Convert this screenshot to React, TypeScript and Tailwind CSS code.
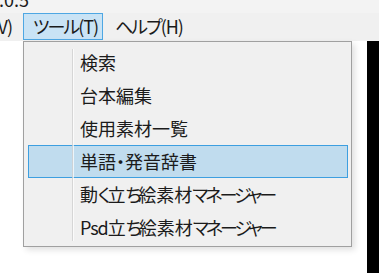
const items = [
  "検索",
  "台本編集",
  "使用素材一覧",
  "単語・発音辞書",
  "動く立ち絵素材マネージャー",
  "Psd立ち絵素材マネージャー",
]

// kana and latin in the reference font run narrower than kanji
const Label = ({ text, kana, latin }: { text: string; kana: string; latin: string }) => {
  const parts = text.split(/([\u3040-\u30ff]+|[\x20-\x7e]+)/).filter(Boolean)
  return (
    <span className="whitespace-nowrap">
      {parts.map((p, i) => {
        if (/^[\x20-\x7e]+$/.test(p)) return <span key={i} className={latin}>{p}</span>
        if (/^[\u3040-\u30fa\u30fc-\u30ff]+$/.test(p)) return <span key={i} className={kana}>{p}</span>
        return <span key={i}>{p}</span>
      })}
    </span>
  )
}

const App = () => {
  return (
    <div className="w-[379px] h-[273px] bg-white flex flex-col overflow-hidden text-[#1b1b1b] font-['Noto_Sans_CJK_JP','Noto_Sans',sans-serif] [font-feature-settings:'palt'] relative">
      <div className="h-[13px] bg-[#f3f3f3] overflow-hidden shrink-0">
        <p className="text-[18px] leading-[18px] -mt-[10px] -ml-[1px]">.0.5</p>
      </div>
      <div className="h-[28px] bg-[#f0f0f0] flex items-start shrink-0 text-[18px]">
        <div className="w-[23px] h-[27px] overflow-hidden flex justify-end items-center pr-[11px]">
          <Label text="表示(V)" kana="tracking-[-2px]" latin="tracking-[-1px]" />
        </div>
        <div className="h-[27px] w-[80px] bg-[#c9e3f5] border border-[#4ea7e3] flex items-center pl-[9px]">
          <Label text="ツール(T)" kana="tracking-[-2px]" latin="tracking-[-1px]" />
        </div>
        <div className="h-[27px] flex items-center pl-[12px]">
          <Label text="ヘルプ(H)" kana="tracking-[-2px]" latin="tracking-[-1px]" />
        </div>
      </div>
      <div className="flex-1 flex">
        <div className="flex-1 bg-white"></div>
        <div className="w-[12px] bg-black"></div>
      </div>

      <div className="absolute left-[23px] top-[41px] w-[329px] h-[206px] bg-[#f0f0f0] border border-[#a0a0a0] pt-[4px] shadow-[3px_3px_6px_rgba(0,0,0,0.12)]">
        {items.map((item, i) => (
          <div
            key={item}
            className={
              i === 3
                ? "h-[33px] ml-[4px] mr-[3px] flex items-center pl-[51px] text-[18px] bg-[#c0dcee] border border-[#3d9fe0]"
                : "h-[33px] ml-[4px] mr-[3px] flex items-center pl-[52px] text-[18px]"
            }
          >
            <Label text={item} kana="tracking-[-3px]" latin="tracking-[-1px]" />
          </div>
        ))}
        <div className="absolute left-[48px] top-[7px] bottom-[5px] w-[2px] flex">
          <div className="w-[1px] bg-[#cfcfcf]/80"></div>
          <div className="w-[1px] bg-white/70"></div>
        </div>
      </div>
    </div>
  )
}

export default App
